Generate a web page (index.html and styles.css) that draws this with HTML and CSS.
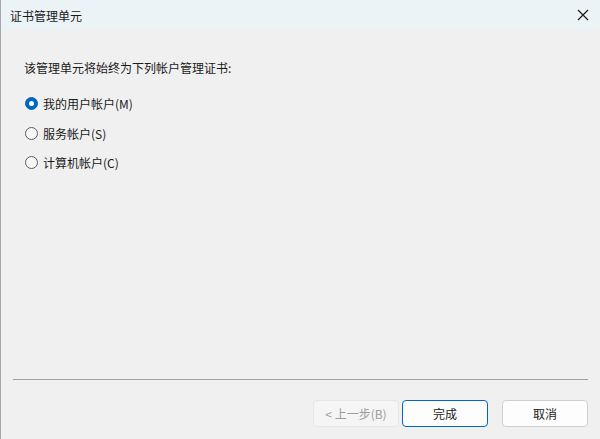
FILE: index.html
```html
<!DOCTYPE html>
<html lang="zh-CN">
<head>
    <meta charset="UTF-8">
    <title>证书管理单元</title>
    <link rel="stylesheet" href="styles.css">
</head>
<body>

<div class="window">
    <div class="titlebar">
        <span class="title">证书管理单元</span>
        <span class="close">
            <svg width="12" height="12" viewBox="0 0 12 12">
                <path d="M1 1 L11 11 M11 1 L1 11" stroke="#1a1a1a" stroke-width="1.2" fill="none"/>
            </svg>
        </span>
    </div>

    <div class="content">
        <p class="prompt">该管理单元将始终为下列帐户管理证书:</p>
        <label class="option"><span class="radio checked"></span>我的用户帐户(M)</label>
        <label class="option"><span class="radio"></span>服务帐户(S)</label>
        <label class="option"><span class="radio"></span>计算机帐户(C)</label>
    </div>

    <div class="separator"></div>

    <div class="footer">
        <button class="btn disabled">&lt;&nbsp;上一步(B)</button>
        <button class="btn primary">完成</button>
        <button class="btn cancel">取消</button>
    </div>
</div>

</body>
</html>
```

FILE: styles.css
```css
body {
    margin: 0;
    padding: 0;
    font-family: "Noto Sans CJK SC", "Noto Sans", sans-serif;
    font-size: 12px;
    color: #1a1a1a;
    background-color: #f0f0f0;
}
.window {
    width: 600px;
    height: 439px;
    display: flex;
    flex-direction: column;
    box-sizing: border-box;
    border-left: 1px solid #a8a8a8;
}
.titlebar {
    height: 30px;
    background-color: #ebf3f7;
    display: flex;
    align-items: center;
    justify-content: space-between;
    padding: 0 11px 0 9px;
    flex-shrink: 0;
}
.close {
    display: flex;
    align-items: center;
}
.content {
    flex: 1;
    padding: 29px 0 0 23px;
}
.prompt {
    margin: 0 0 13px 0;
    line-height: 17px;
}
.option {
    display: flex;
    align-items: center;
    height: 29.5px;
    line-height: 17px;
}
.radio {
    width: 11px;
    height: 11px;
    border: 1px solid #5d5d5d;
    border-radius: 50%;
    background-color: #f7f7f7;
    margin: 0 5px 0 1px;
    position: relative;
    flex-shrink: 0;
}
.radio.checked {
    background-color: #0067c0;
    border-color: #0067c0;
}
.radio.checked::after {
    content: "";
    position: absolute;
    left: 3px;
    top: 3px;
    width: 5px;
    height: 5px;
    border-radius: 50%;
    background-color: #fff;
}
.separator {
    height: 1px;
    background-color: #a0a0a0;
    margin: 0 12px 0 12px;
    flex-shrink: 0;
}
.footer {
    display: flex;
    justify-content: flex-end;
    padding: 20px 12px 12px 0;
    flex-shrink: 0;
}
.btn {
    width: 86px;
    height: 27px;
    font-family: inherit;
    font-size: 12px;
    border-radius: 4px;
    background-color: #fdfdfd;
    border: 1px solid #d0d0d0;
    color: #1a1a1a;
    padding: 0;
}
.btn.disabled {
    background-color: #f5f5f5;
    border-color: #e6e6e6;
    color: #9d9d9d;
}
.btn.primary {
    margin-left: 3px;
    border-color: #0067c0;
}
.btn.cancel {
    margin-left: 14px;
}
```
